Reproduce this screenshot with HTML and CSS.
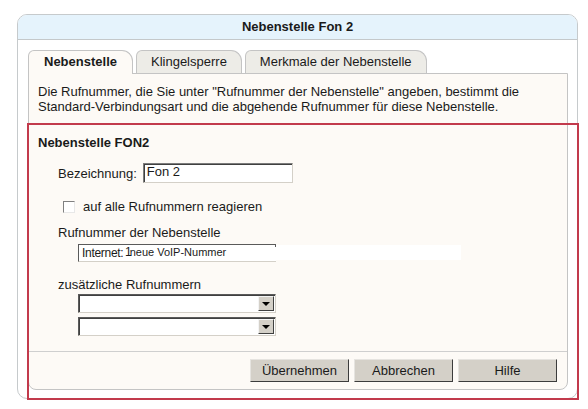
FILE: index.html
```html
<!DOCTYPE html>
<html lang="de">
<head>
    <meta charset="UTF-8">
    <title>Nebenstelle Fon 2</title>
    <link rel="stylesheet" href="styles.css">
</head>
<body>

    <div class="panel">
        <div class="panel-head">Nebenstelle Fon 2</div>

        <div class="tabs">
            <div class="tab active">Nebenstelle</div>
            <div class="tab">Klingelsperre</div>
            <div class="tab">Merkmale der Nebenstelle</div>
        </div>

        <div class="content">
            <p class="intro">Die Rufnummer, die Sie unter "Rufnummer der Nebenstelle" angeben, bestimmt die Standard-Verbindungsart und die abgehende Rufnummer für diese Nebenstelle.</p>

            <div class="form">
                <h2>Nebenstelle FON2</h2>

                <div class="row name-row">
                    <label for="name">Bezeichnung:</label>
                    <div class="input" id="name">Fon 2</div>
                </div>

                <div class="row check-row">
                    <span class="checkbox"></span>
                    <span>auf alle Rufnummern reagieren</span>
                </div>

                <div class="field-label">Rufnummer der Nebenstelle</div>
                <div class="select glitch">
                    <span class="cut">Internet:</span>
                    <span class="strip"><span class="one">1</span>neue VoIP-Nummer</span>
                </div>

                <div class="field-label extra">zusätzliche Rufnummern</div>
                <div class="select first"><span class="arrow"></span></div>
                <div class="select second"><span class="arrow"></span></div>
            </div>

            <div class="footer">
                <button>Übernehmen</button>
                <button>Abbrechen</button>
                <button>Hilfe</button>
            </div>
        </div>
    </div>

    <div class="marker"></div>

</body>
</html>
```

FILE: styles.css
```css
body {
    margin: 0;
    font-family: "Liberation Sans", Arial, sans-serif;
    font-size: 13px;
    line-height: 15px;
    color: #1a1a1a;
    background-color: #fff;
}
.panel {
    box-sizing: border-box;
    width: 561px;
    height: 385px;
    margin: 14px 0 0 17px;
    border: 1px solid #c6cacc;
    border-radius: 10px;
    background-color: #fff;
    display: flex;
    flex-direction: column;
}
.panel-head {
    height: 24px;
    line-height: 24px;
    text-align: center;
    font-weight: bold;
    background-color: #e5f3fc;
    border-bottom: 1px solid #c4c8ca;
    border-radius: 9px 9px 0 0;
}
.tabs {
    display: flex;
    gap: 3px;
    padding: 10px 0 0 10px;
}
.tab {
    height: 22px;
    line-height: 22px;
    padding: 0 14px;
    border: 1px solid #c4c4c4;
    border-bottom: none;
    border-radius: 6px 11px 0 0;
    background-color: #edece7;
    position: relative;
    z-index: 1;
}
.tab.active {
    font-weight: bold;
    padding: 0 15px;
    background-color: #fdfaf6;
    height: 23px;
    margin-bottom: -1px;
}
.content {
    flex: 1;
    margin: 0 9px 8px 10px;
    border: 1px solid #c4c4c4;
    border-radius: 0 0 8px 8px;
    background-color: #fdfaf6;
    display: flex;
    flex-direction: column;
}
.intro {
    margin: 10px 20px 0 9px;
}
.form {
    flex: 1;
    padding: 21px 0 0 9px;
}
h2 {
    margin: 0;
    font-size: 13px;
    font-weight: bold;
}
.row {
    display: flex;
    align-items: center;
    padding-left: 20px;
}
.name-row {
    margin-top: 13px;
}
.row label {
    margin-right: 6px;
}
.input {
    box-sizing: border-box;
    width: 150px;
    height: 20px;
    line-height: 16px;
    padding: 0 3px;
    background-color: #fff;
    border: 1px solid;
    border-color: #7c7c7c #d4d0c8 #d4d0c8 #7c7c7c;
    box-shadow: inset 1px 1px 0 #404040;
}
.check-row {
    margin-top: 16px;
    padding-left: 25px;
}
.checkbox {
    box-sizing: border-box;
    width: 12px;
    height: 12px;
    margin-right: 8px;
    background-color: #fff;
    border: 1px solid;
    border-color: #808080 #e8e8e8 #e8e8e8 #808080;
}
.field-label {
    margin: 11px 0 0 20px;
}
.field-label.extra {
    margin-top: 15px;
}
.select {
    box-sizing: border-box;
    position: relative;
    width: 198px;
    height: 19px;
    margin-left: 40px;
    background-color: #fff;
    border: 1px solid;
    border-color: #5a5a5a #d4d0c8 #d4d0c8 #5a5a5a;
    box-shadow: inset 1px 1px 0 #404040;
}
.select.glitch {
    height: 18px;
    margin-top: 4px;
    padding-left: 3px;
    line-height: 16px;
    border-right: none;
    box-shadow: none;
}
.select.glitch::after {
    content: "";
    position: absolute;
    right: 0;
    top: -1px;
    width: 1px;
    height: 3px;
    background-color: #5a5a5a;
}
.select.first {
    margin-top: 2px;
}
.select.second {
    margin-top: 4px;
}
.cut {
    font-size: 12px;
    letter-spacing: -0.3px;
}
.strip {
    position: absolute;
    left: 46px;
    top: 0;
    width: 336px;
    height: 15px;
    line-height: 15px;
    font-size: 11px;
    background-color: #fff;
}
.one {
    font-size: 12px;
    letter-spacing: -2px;
}
.arrow {
    position: absolute;
    right: 1px;
    top: 1px;
    box-sizing: border-box;
    width: 16px;
    height: 15px;
    background-color: #d4d0c8;
    border: 1px solid;
    border-color: #f4f4f4 #404040 #404040 #f4f4f4;
}
.arrow::after {
    content: "";
    position: absolute;
    left: 3px;
    top: 5px;
    border-left: 4px solid transparent;
    border-right: 4px solid transparent;
    border-top: 4px solid #000;
}
.footer {
    display: flex;
    justify-content: flex-end;
    gap: 5px;
    padding: 7px 10px 7px;
    border-top: 1px solid #cfcfcf;
}
button {
    box-sizing: border-box;
    width: 99px;
    height: 23px;
    font-family: "Liberation Sans", Arial, sans-serif;
    font-size: 13px;
    color: #1a1a1a;
    background-color: #d4d0c8;
    border: 1px solid;
    border-color: #e6e4e0 #3c3c3c #3c3c3c #e6e4e0;
    padding: 0;
}
.marker {
    position: absolute;
    left: 27px;
    top: 123px;
    width: 552px;
    height: 277px;
    box-sizing: border-box;
    border: 2px solid #c23a4c;
    pointer-events: none;
}
```
